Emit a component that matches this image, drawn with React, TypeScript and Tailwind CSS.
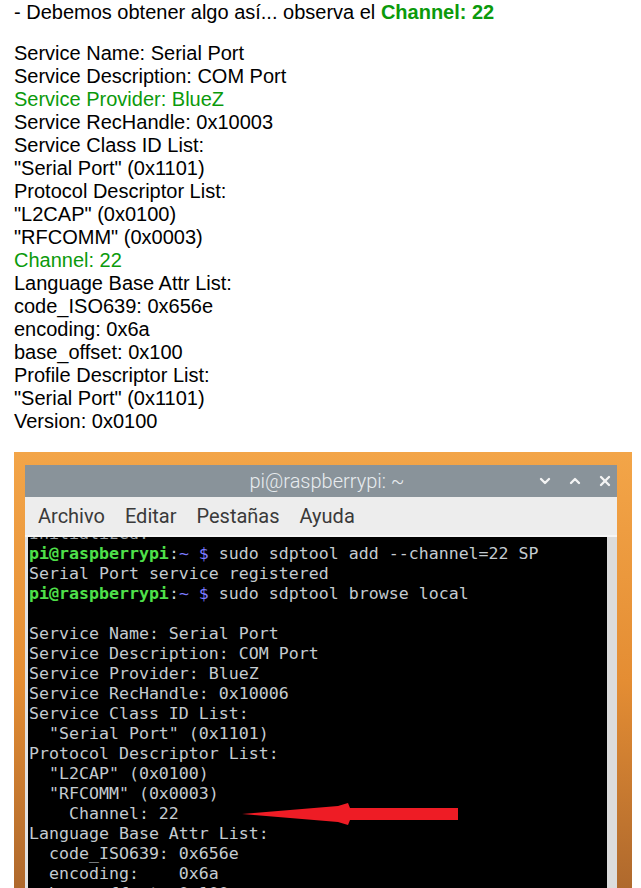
import { ChevronDown, ChevronUp, X } from 'lucide-react'

const green = 'text-[#0b9a0b]'

const specLines: { text: string; hi?: boolean }[] = [
  { text: 'Service Name: Serial Port' },
  { text: 'Service Description: COM Port' },
  { text: 'Service Provider: BlueZ', hi: true },
  { text: 'Service RecHandle: 0x10003' },
  { text: 'Service Class ID List:' },
  { text: '"Serial Port" (0x1101)' },
  { text: 'Protocol Descriptor List:' },
  { text: '"L2CAP" (0x0100)' },
  { text: '"RFCOMM" (0x0003)' },
  { text: 'Channel: 22', hi: true },
  { text: 'Language Base Attr List:' },
  { text: 'code_ISO639: 0x656e' },
  { text: 'encoding: 0x6a' },
  { text: 'base_offset: 0x100' },
  { text: 'Profile Descriptor List:' },
  { text: '"Serial Port" (0x1101)' },
  { text: 'Version: 0x0100' },
]

const termLines = [
  '',
  'Service Name: Serial Port',
  'Service Description: COM Port',
  'Service Provider: BlueZ',
  'Service RecHandle: 0x10006',
  'Service Class ID List:',
  '  "Serial Port" (0x1101)',
  'Protocol Descriptor List:',
  '  "L2CAP" (0x0100)',
  '  "RFCOMM" (0x0003)',
  '    Channel: 22',
  'Language Base Attr List:',
  '  code_ISO639: 0x656e',
  '  encoding:    0x6a',
  '  base_offset: 0x100',
  'Profile Descriptor List:',
]

const Prompt = ({ cmd }: { cmd: string }) => (
  <div>
    <span className="font-bold text-[#4fe04a]">pi@raspberrypi</span>
    <span className="text-[#c8ced2]">:</span>
    <span className="text-[#7b7bff]">~ $</span>
    <span> {cmd}</span>
  </div>
)

const Arrow = () => (
  <svg width="218" height="28" viewBox="0 0 218 28" className="absolute left-[214px] top-[263px]">
    <path
      d="M0 14 L12 13 L24 12 L36 11 L48 10 L60 9 L72 8 L84 7 L96 6 L106 3 L108 8 L216 8 L216 20 L108 20 L106 25 L96 22 L84 21 L72 20 L60 19 L48 18 L36 17 L24 16 L12 15 Z"
      fill="#ee1c25"
    />
  </svg>
)

export default function App() {
  return (
    <div className="min-h-screen bg-white px-[14px] pt-[1px] font-['Liberation_Sans',Arial,sans-serif] text-[20px] leading-[23px] text-black">
      <p className="mb-[18px]">
        - Debemos obtener algo así... observa el <b className={green}>Channel: 22</b>
      </p>

      <div>
        {specLines.map((l, i) => (
          <div key={i} className={l.hi ? green : ''}>
            {l.text}
          </div>
        ))}
      </div>

      <div className="mt-[19px] h-[460px] w-[618px] overflow-hidden bg-gradient-to-b from-[#f3a548] via-[#e48d33] to-[#a9652c] pl-[11px] pr-[15px] pt-[13px]">
        <div className="flex h-full flex-col bg-[#e2e2e2]">
          <div className="relative flex h-[32px] shrink-0 items-center justify-center bg-[#89939a] font-['Roboto',sans-serif] text-[20px] font-light text-[#e8ecef]">
            <span className="ml-[12px]">pi@raspberrypi: ~</span>
            <div className="absolute right-[4px] top-0 flex h-full items-center gap-[14px] text-[#f4f4f4]">
              <ChevronDown size={16} strokeWidth={3.5} />
              <ChevronUp size={16} strokeWidth={3.5} />
              <X size={16} strokeWidth={3.5} />
            </div>
          </div>
          <div className="flex h-[40px] shrink-0 items-center gap-[20px] border-b-2 border-[#f6f6f6] bg-[#ededed] pl-[13px] font-['Roboto',sans-serif] text-[20px] text-[#3a3a3a]">
            <span>Archivo</span>
            <span>Editar</span>
            <span>Pestañas</span>
            <span>Ayuda</span>
          </div>
          <div className="flex min-h-0 flex-1 pl-[3px]">
            <div className="relative flex-1 overflow-hidden bg-black pl-[1px] font-['DejaVu_Sans_Mono',monospace] text-[16.6px] leading-[20px] whitespace-pre text-[#c4cbd0]">
              <div className="-mt-[13px] text-[#9aa0a4]">Initialized.</div>
              <Prompt cmd="sudo sdptool add --channel=22 SP" />
              <div>Serial Port service registered</div>
              <Prompt cmd="sudo sdptool browse local" />
              {termLines.map((l, i) => (
                <div key={i}>{l || ' '}</div>
              ))}
              <Arrow />
            </div>
            <div className="w-[10px] bg-[#dcdcdc]" />
          </div>
        </div>
      </div>
    </div>
  )
}
